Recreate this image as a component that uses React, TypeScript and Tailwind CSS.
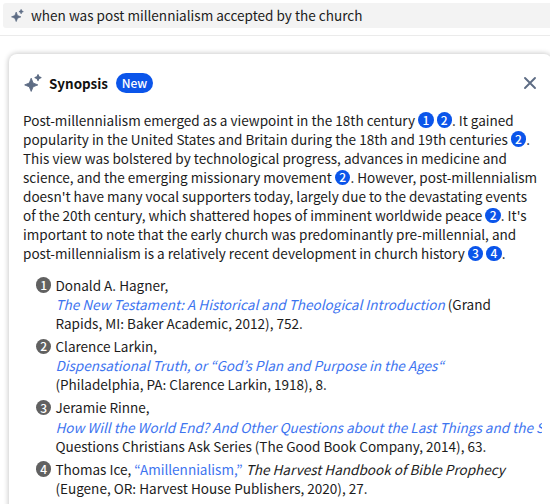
import type { ReactNode } from "react";

function Sparkle({ className }: { className: string }) {
  return (
    <svg viewBox="0 0 18 18" className={className} fill="#5d6c84" aria-hidden="true">
      <path d="M7.2 4.2 L9.1 9 L13.8 10.9 L9.1 12.8 L7.2 17.4 L5.3 12.8 L0.7 10.9 L5.3 9Z" stroke="#5d6c84" strokeWidth="0.9" strokeLinejoin="round" />
      <path d="M14 0.6 Q14.3 3.3 17 3.6 Q14.3 3.9 14 6.6 Q13.7 3.9 11 3.6 Q13.7 3.3 14 0.6Z" stroke="#5d6c84" strokeWidth="1.1" strokeLinejoin="round" />
    </svg>
  );
}

function Cite({ n }: { n: number }) {
  return (
    <button className="inline-flex size-[15.4px] items-center justify-center rounded-full bg-[#0b55ea] align-[0.5px] text-[12px] leading-none font-medium text-white">
      {n}
    </button>
  );
}

function Source({ n, children }: { n: number; children: ReactNode }) {
  return (
    <li className="flex gap-[4px]">
      <span className="mt-[1.5px] flex size-[15.4px] shrink-0 items-center justify-center rounded-full bg-[#616161] text-[12px] leading-none font-medium text-white">
        {n}
      </span>
      <div className="min-w-0 flex-1 overflow-hidden whitespace-nowrap">{children}</div>
    </li>
  );
}

function SourceLink({ children }: { children: ReactNode }) {
  return (
    <a href="#" className="text-[#3d74f0]">
      {children}
    </a>
  );
}

export default function App() {
  return (
    <div className="h-[504px] w-[550px] overflow-hidden bg-white font-['Noto_Sans_CJK_KR','Open_Sans',sans-serif] text-[13.56px] text-[#1c1c1c]">
      <header className="h-[36px] border-b border-[#ebebeb] pt-[3px] pl-[3px]">
        <div className="flex h-[25px] items-center rounded-l-[3px] bg-[#f3f3f3] pl-[8px]">
          <Sparkle className="size-[13px]" />
          <span className="mb-[2px] ml-[7px] leading-[20px] whitespace-nowrap">
            when was post millennialism accepted by the church
          </span>
        </div>
      </header>

      <section className="mt-[18px] ml-[9px] h-[480px] w-[543px] rounded-lg bg-white pt-[18px] pl-[14px] shadow-[0_0_5px_1px_rgba(0,0,0,0.2)]">
        <div className="flex h-[22px] items-center pl-px">
          <Sparkle className="size-[18px]" />
          <h2 className="ml-[7px] text-[13.4px] leading-[20px] font-bold text-[#111]">Synopsis</h2>
          <span className="ml-[8px] flex h-[20px] w-[37px] items-center justify-center rounded-full bg-[#0b55ea] text-[12px] leading-none font-medium text-white">
            New
          </span>
          <button className="ml-auto pr-[15px]" aria-label="Close">
            <svg viewBox="0 0 14 14" className="size-[14px]" stroke="#5d6c84" strokeWidth="1.9" strokeLinecap="round">
              <path d="M2 2L12 12M12 2L2 12" />
            </svg>
          </button>
        </div>

        <p className="mt-[16.6px] leading-[19.05px] whitespace-nowrap">
          Post-millennialism emerged as a viewpoint in the 18th century <Cite n={1} /> <Cite n={2} />. It gained
          <br />
          popularity in the United States and Britain during the 18th and 19th centuries <Cite n={2} />.
          <br />
          This view was bolstered by technological progress, advances in medicine and
          <br />
          science, and the emerging missionary movement <Cite n={2} />. However, post-millennialism
          <br />
          doesn't have many vocal supporters today, largely due to the devastating events
          <br />
          of the 20th century, which shattered hopes of imminent worldwide peace <Cite n={2} />. It's
          <br />
          important to note that the early church was predominantly pre-millennial, and
          <br />
          post-millennialism is a relatively recent development in church history <Cite n={3} /> <Cite n={4} />.
        </p>

        <ol className="mt-[12.9px] mr-[10px] ml-[13px] flex flex-col gap-[3.8px] leading-[19.15px]">
          <Source n={1}>
            Donald A. Hagner,
            <br />
            <SourceLink>
              <i>The New Testament: A Historical and Theological Introduction</i>
            </SourceLink>{" "}
            (Grand
            <br />
            Rapids, MI: Baker Academic, 2012), 752.
          </Source>
          <Source n={2}>
            Clarence Larkin,
            <br />
            <SourceLink>
              <i>Dispensational Truth, or “God’s Plan and Purpose in the Ages“</i>
            </SourceLink>
            <br />
            (Philadelphia, PA: Clarence Larkin, 1918), 8.
          </Source>
          <Source n={3}>
            Jeramie Rinne,
            <br />
            <SourceLink>
              <i>How Will the World End? And Other Questions about the Last Things and the Second Coming</i>
            </SourceLink>
            <br />
            Questions Christians Ask Series (The Good Book Company, 2014), 63.
          </Source>
          <Source n={4}>
            Thomas Ice, <SourceLink>“Amillennialism,”</SourceLink> <i>The Harvest Handbook of Bible Prophecy</i>
            <br />
            (Eugene, OR: Harvest House Publishers, 2020), 27.
          </Source>
        </ol>
      </section>
    </div>
  );
}
